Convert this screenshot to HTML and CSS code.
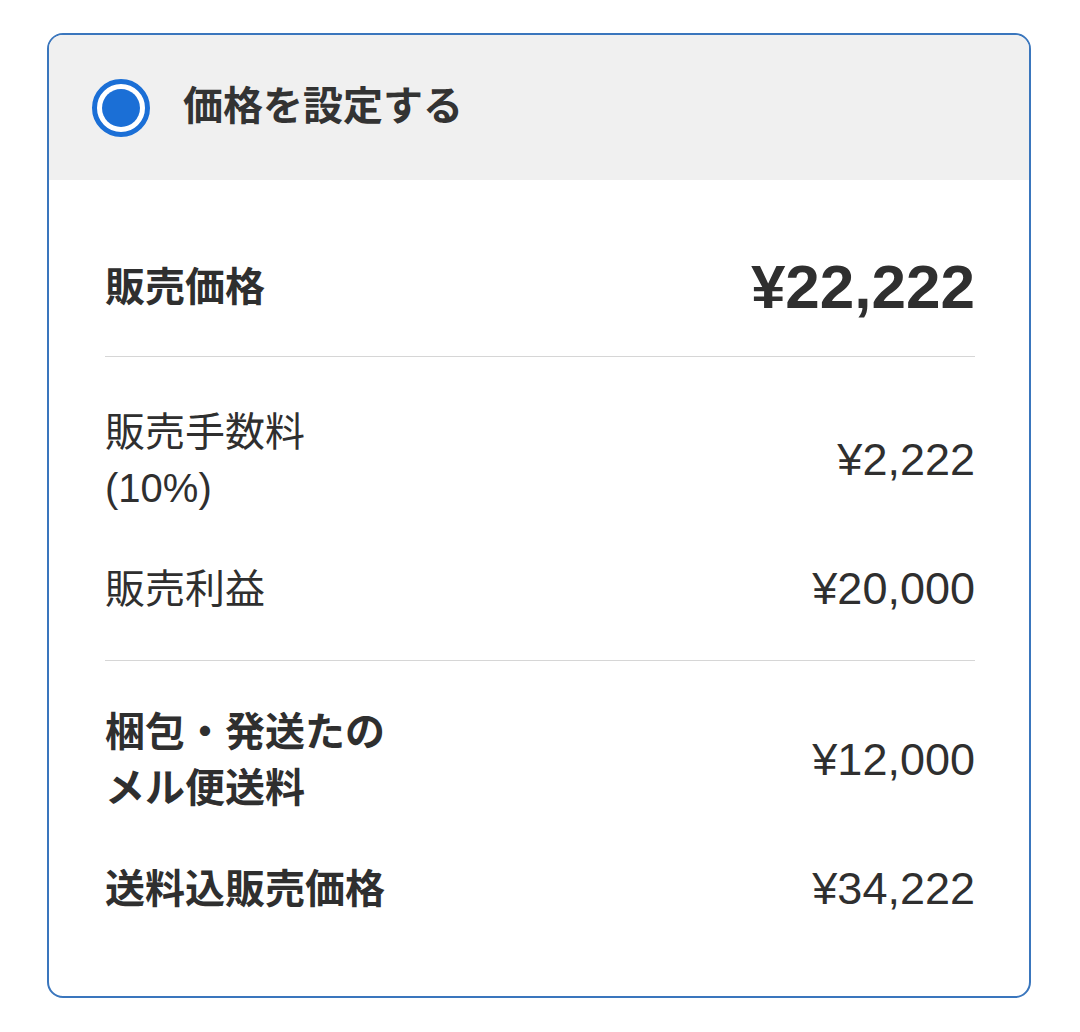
FILE: index.html
```html
<!DOCTYPE html>
<html lang="ja">
<head>
<meta charset="utf-8">
<link rel="stylesheet" href="styles.css">
</head>
<body>
<div class="page">
  <div class="card">
    <div class="card-header">
      <span class="radio"><span class="radio-dot"></span></span>
      <span class="title">価格を設定する</span>
    </div>
    <div class="section s1">
      <div class="row">
        <span class="label bold">販売価格</span>
        <span class="value big">¥22,222</span>
      </div>
    </div>
    <div class="section s2">
      <div class="row">
        <span class="label">販売手数料<br>(10%)</span>
        <span class="value">¥2,222</span>
      </div>
      <div class="row">
        <span class="label">販売利益</span>
        <span class="value">¥20,000</span>
      </div>
    </div>
    <div class="section s3">
      <div class="row">
        <span class="label bold">梱包・発送たの<br>メル便送料</span>
        <span class="value">¥12,000</span>
      </div>
      <div class="row">
        <span class="label bold">送料込販売価格</span>
        <span class="value">¥34,222</span>
      </div>
    </div>
  </div>
</div>
</body>
</html>
```
FILE: styles.css
```css
html, body {
  margin: 0;
  padding: 0;
  background: #ffffff;
}
body {
  font-family: "Liberation Sans", "Noto Sans CJK JP", sans-serif;
  color: #2f2f2f;
}
.page {
  padding: 33px 49px 0 47px;
}
.card {
  border: 2px solid #3a76bd;
  border-radius: 16px;
  overflow: hidden;
  width: 980px;
}
.card-header {
  background: #f0f0f0;
  height: 145px;
  display: flex;
  align-items: center;
  padding-left: 43px;
  gap: 33px;
}
.radio {
  width: 58px;
  height: 58px;
  box-sizing: border-box;
  border: 5px solid #1b6fd6;
  border-radius: 50%;
  display: flex;
  align-items: center;
  justify-content: center;
  background: #ffffff;
}
.radio-dot {
  width: 38px;
  height: 38px;
  border-radius: 50%;
  background: #1b6fd6;
}
.title {
  font-family: "Noto Sans CJK JP", sans-serif;
  font-weight: 700;
  font-size: 40px;
  line-height: 1;
  padding-bottom: 10px;
  color: #333333;
}
.section {
  margin: 0 54px 0 56px;
  display: flex;
  flex-direction: column;
  gap: 45px;
}
.s1 {
  padding: 79px 0 41px;
  border-bottom: 1px solid #d6d6d6;
}
.s2 {
  padding: 47px 0 43px;
  border-bottom: 1px solid #d6d6d6;
}
.s3 {
  padding: 43px 0 79px;
  gap: 45px;
}
.row {
  display: flex;
  justify-content: space-between;
  align-items: center;
}
.label {
  font-size: 40px;
  line-height: 56px;
  font-weight: 400;
}
.bold {
  font-weight: 700;
}
.value {
  font-family: "Liberation Sans", sans-serif;
  font-size: 45px;
  line-height: 56px;
}
.big {
  font-size: 62px;
  font-weight: 700;
}
```
